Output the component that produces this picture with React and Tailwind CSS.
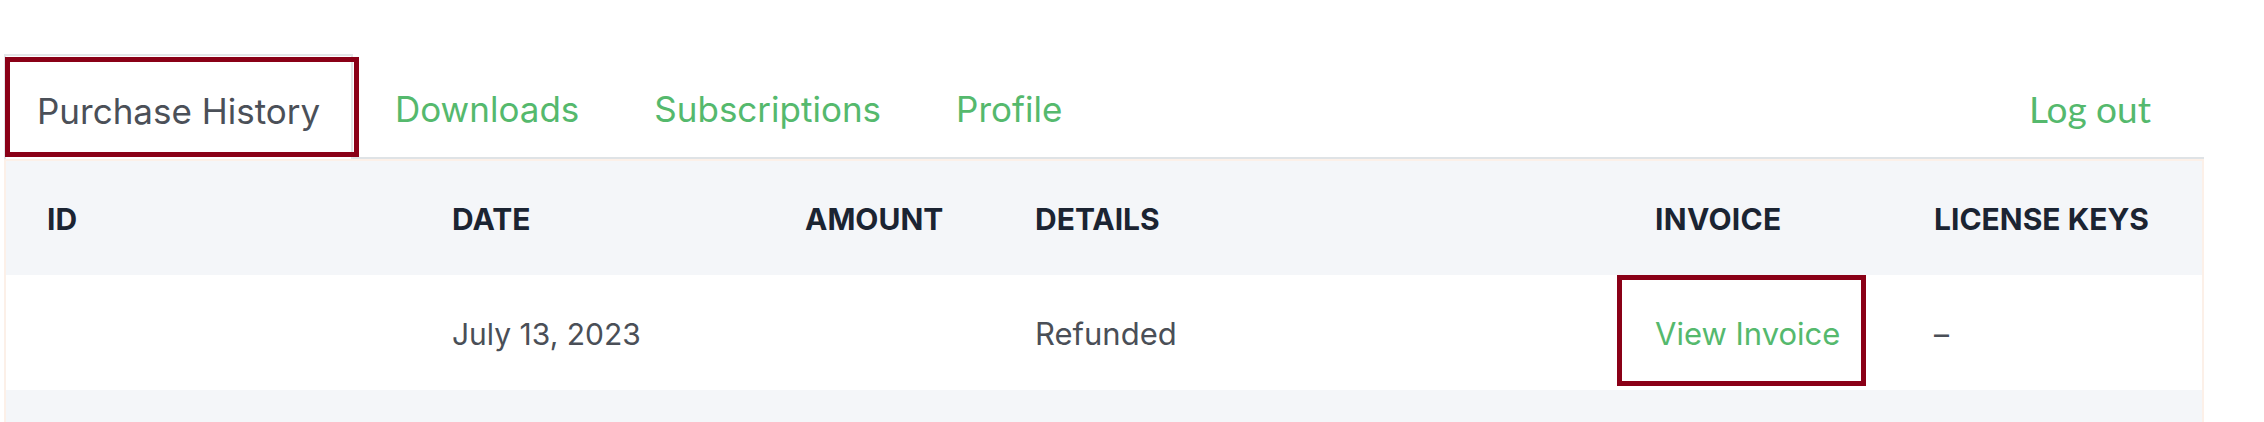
import React from "react";

const green = "text-[#55b96d]";

export default function App() {
  return (
    <div className="w-[2264px] h-[422px] bg-white overflow-hidden pt-[54px] font-['Inter',sans-serif]">
      <div className="ml-[4px] w-[2200px]">
        {/* Tabs */}
        <div className="flex items-stretch h-[105px] border-b-2 border-[#dfe3e6]">
          <div className="relative w-[349px] h-[105px] -mb-[2px] bg-white border-2 border-b-0 border-[#e3e6e8] flex items-center pt-[8px] pl-[31px] text-[35px] text-[#4b5058]">
            Purchase History
            <div className="absolute -left-[1px] top-[1px] w-[354px] h-[100px] border-[5px] border-[#8a0017]" />
          </div>
          <div className={`flex items-center pt-[8px] ml-[42px] gap-[75px] text-[35px] ${green}`}>
            <span>Downloads</span>
            <span>Subscriptions</span>
            <span>Profile</span>
          </div>
          <div className={`ml-auto mr-[53px] flex items-center pt-[6px] text-[37px] font-['Lato',sans-serif] ${green}`}>
            Log out
          </div>
        </div>
        {/* Table */}
        <div className="border-2 border-b-0 border-[#fcf0e8] bg-[#f4f6f9]">
          <div className="grid grid-cols-[405px_353px_230px_620px_279px_1fr] h-[114px] items-center pt-[2px] text-[30px] font-bold text-[#1b2432] uppercase">
            <div className="pl-[41px]">ID</div>
            <div className="pl-[41px]">Date</div>
            <div className="pl-[41px]">Amount</div>
            <div className="pl-[41px]">Details</div>
            <div className="pl-[41px] tracking-[0.3px]">Invoice</div>
            <div className="pl-[41px]">License Keys</div>
          </div>
          <div className="grid grid-cols-[405px_353px_230px_620px_279px_1fr] h-[115px] items-center bg-white text-[30px] text-[#4a4f57]">
            <div className="pl-[41px]"></div>
            <div className="pl-[41px] pt-[4px]">July 13, 2023</div>
            <div className="pl-[41px]"></div>
            <div className="pl-[41px] pt-[4px] text-[31px]">Refunded</div>
            <div className="relative h-full flex items-center pl-[41px] pt-[4px]">
              <span className={`${green} text-[31px]`}>View Invoice</span>
              <div className="absolute left-[3px] top-0 w-[249px] h-[111px] border-[5px] border-[#8a0017]" />
            </div>
            <div className="pl-[41px] pt-[4px]">–</div>
          </div>
          <div className="h-[40px]" />
        </div>
      </div>
    </div>
  );
}
